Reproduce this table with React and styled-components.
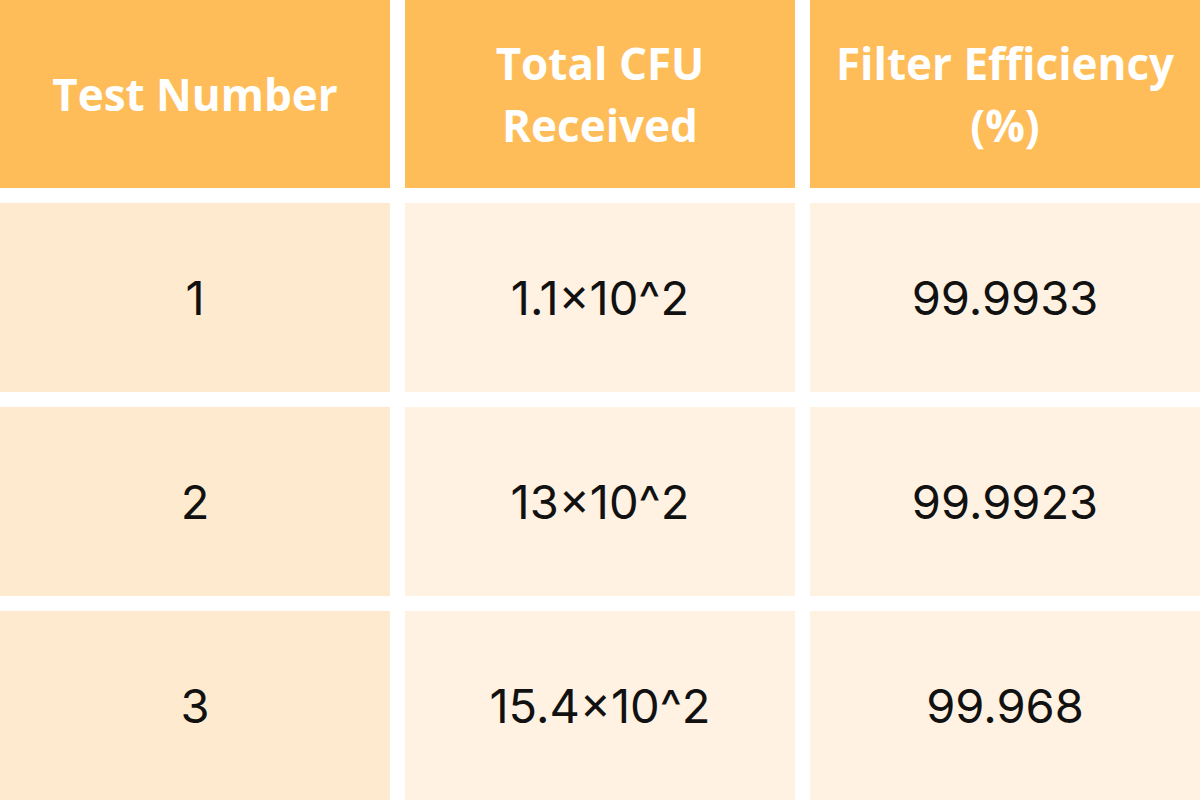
import React from "react";
import styled, { createGlobalStyle } from "styled-components";

const GlobalStyle = createGlobalStyle`
  html, body {
    margin: 0;
    padding: 0;
    background: #fff;
  }
  body {
    font-family: "Open Sans", "Liberation Sans", sans-serif;
  }
`;

const Table = styled.div`
  width: 1200px;
  height: 800px;
  display: grid;
  grid-template-columns: 390px 390px 390px;
  grid-template-rows: 188px 189px 189px 189px;
  gap: 15px;
  background: #fff;
  overflow: hidden;
`;

const HeadCell = styled.div`
  display: flex;
  align-items: center;
  justify-content: center;
  text-align: center;
  background: #febd59;
  color: #fff;
  font-weight: 700;
  font-size: 44px;
  line-height: 62px;
  padding: 0 8px;
`;

const Cell = styled.div`
  display: flex;
  align-items: center;
  justify-content: center;
  background: ${(p) => (p.$first ? "#feebcf" : "#fff2e2")};
  color: #111;
  font-family: Inter, "Liberation Sans", sans-serif;
  font-size: 47px;
  font-weight: 400;
`;

const rows = [
  ["1", "1.1×10^2", "99.9933"],
  ["2", "13×10^2", "99.9923"],
  ["3", "15.4×10^2", "99.968"],
];

const App = () => {
  return (
    <>
      <GlobalStyle />
      <Table>
        <HeadCell>Test Number</HeadCell>
        <HeadCell>
          Total CFU
          <br />
          Received
        </HeadCell>
        <HeadCell>
          Filter Efficiency
          <br />
          (%)
        </HeadCell>
        {rows.map((r) =>
          r.map((v, i) => (
            <Cell key={r[0] + "-" + i} $first={i === 0}>
              {v}
            </Cell>
          ))
        )}
      </Table>
    </>
  );
};

export default App;
